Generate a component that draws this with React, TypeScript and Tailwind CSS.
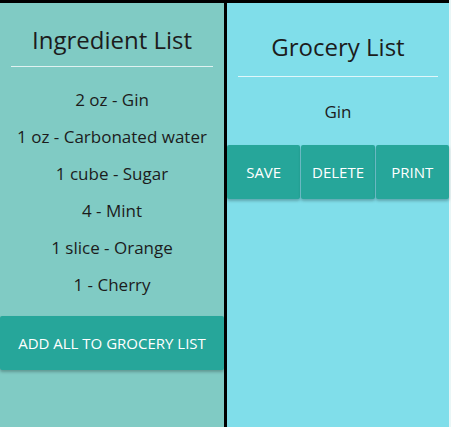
const ingredients = [
  "2 oz - Gin",
  "1 oz - Carbonated water",
  "1 cube - Sugar",
  "4 - Mint",
  "1 slice - Orange",
  "1 - Cherry",
];

const btn =
  "h-[54px] bg-[#26a69a] text-white uppercase text-[15px] rounded-[2px] shadow-[0_2px_3px_rgba(0,0,0,0.25)] flex items-center justify-center";

export default function App() {
  return (
    <div className="w-[451px] h-[427px] flex bg-[#eaf6f7]">
      <div
        className="w-[449px] h-full border-t-[3px] border-black flex text-[#1c1c1c]"
        style={{ fontFamily: '"Open Sans", "Noto Sans", sans-serif' }}
      >
        <div className="w-[224px] bg-[#80cbc4] flex flex-col">
          <h2 className="text-[24px] leading-[32px] text-center mt-[21px]">Ingredient List</h2>
          <div className="mx-[11px] mt-[10px] h-px bg-[#e0f2f1]" />
          <ul className="mt-[14px] text-center text-[17px]">
            {ingredients.map((i) => (
              <li key={i} className="leading-[37px]">
                {i}
              </li>
            ))}
          </ul>
          <button className={btn + " mt-[13px] w-full"}>Add all to grocery list</button>
        </div>
        <div className="w-[3px] bg-black" />
        <div className="flex-1 bg-[#80deea] flex flex-col">
          <h2 className="text-[24px] leading-[32px] text-center mt-[28px]">Grocery List</h2>
          <div className="mx-[11px] mt-[13px] h-px bg-[#e0f7fa]" />
          <p className="text-center text-[17px] leading-[37px] mt-[16px]">Gin</p>
          <div className="mt-[15px] flex gap-px">
            <button className={btn + " flex-1"}>Save</button>
            <button className={btn + " flex-1"}>Delete</button>
            <button className={btn + " flex-1"}>Print</button>
          </div>
        </div>
      </div>
    </div>
  );
}
